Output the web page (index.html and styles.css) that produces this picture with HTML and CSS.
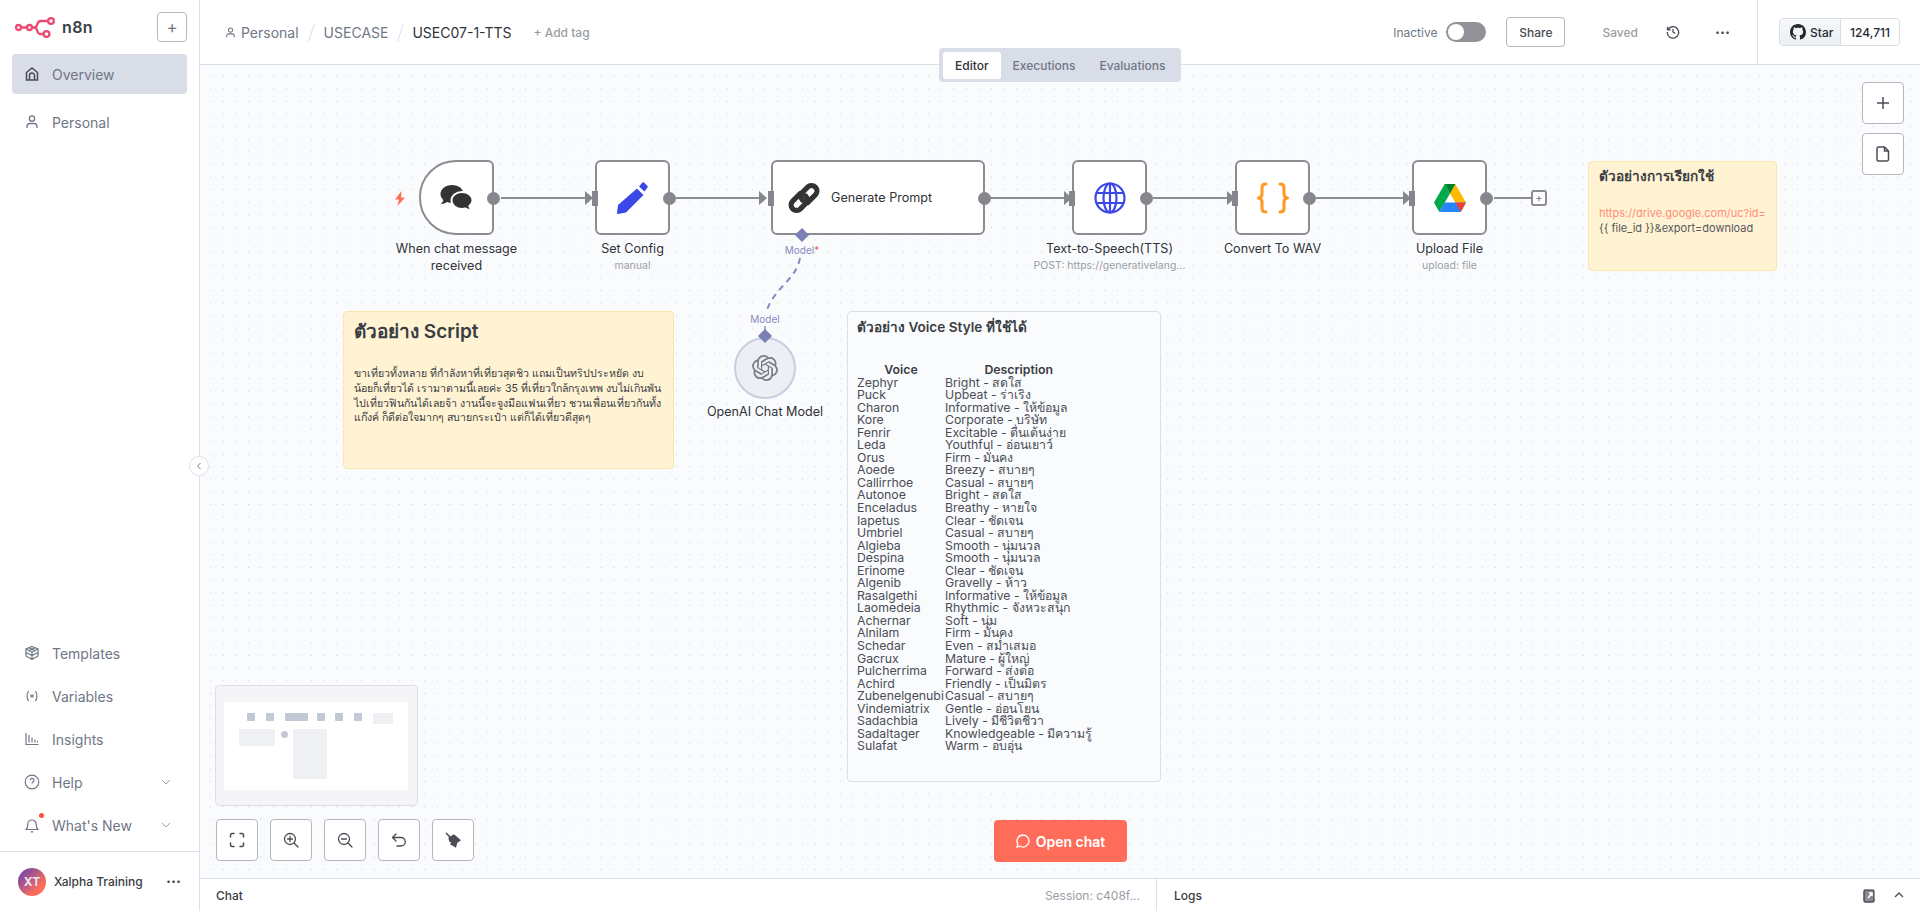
FILE: index.html
```html
<!DOCTYPE html>
<html lang="en">
<head>
    <meta charset="UTF-8">
    <meta name="viewport" content="width=device-width, initial-scale=1.0">
    <title>USEC07-1-TTS - n8n</title>
    <link rel="stylesheet" href="styles.css">
</head>
<body>
    <aside class="sidebar">
        <div class="brand">
            <svg class="logo" width="41" height="21" viewBox="0 0 41 21" fill="none" stroke="#ea4b71" stroke-width="2.300">
                <circle cx="3.500" cy="10.500" r="2.500"/>
                <circle cx="14.500" cy="10.500" r="2.500"/>
                <circle cx="36" cy="4" r="2.900"/>
                <circle cx="31.500" cy="17" r="2.900"/>
                <path d="M6 10.500h6M17 10.500h2.500c3.500 0 2-6.500 6-6.500h7.100M19.500 10.500c3.500 0 2 6.500 5.500 6.500h3.600"/>
            </svg>
            <span class="brand-name">n8n</span>
            <button class="add-btn">+</button>
        </div>
        <nav class="nav-top">
            <a class="nav-item active">
                <svg class="nav-icon" viewBox="0 0 16 16" fill="none" stroke="#4a4d55" stroke-width="1.500"><path d="M2.500 14V6.500L8 2l5.500 4.500V14zM5.500 14V9.500a2.500 2.500 0 0 1 5 0V14"/></svg>
                <span>Overview</span>
            </a>
            <a class="nav-item">
                <svg class="nav-icon" viewBox="0 0 16 16" fill="none" stroke="#6f7786" stroke-width="1.300"><circle cx="8" cy="4.500" r="2.700"/><path d="M3 14v-1.500a3 3 0 0 1 3-3h4a3 3 0 0 1 3 3V14"/></svg>
                <span>Personal</span>
            </a>
        </nav>
        <nav class="nav-bottom">
            <a class="nav-item">
                <svg class="nav-icon" viewBox="0 0 16 16" fill="none" stroke="#6f7786" stroke-width="1.200"><path d="M8 1.500l6 2.500v7l-6 3.500L2 11V4zM2 4l6 3 6-3M8 7v7.500M2 7.500l6 3 6-3M5 2.800l6 2.800M11 2.800L5 5.600"/></svg>
                <span>Templates</span>
            </a>
            <a class="nav-item">
                <svg class="nav-icon" viewBox="0 0 16 16" fill="none" stroke="#6f7786" stroke-width="1.200"><path d="M4.500 3C2.800 6 2.800 10 4.500 13M11.500 3c1.700 3 1.700 7 0 10M6.300 6.300l3.400 3.400M9.700 6.300l-3.400 3.400"/></svg>
                <span>Variables</span>
            </a>
            <a class="nav-item">
                <svg class="nav-icon" viewBox="0 0 16 16" fill="none" stroke="#6f7786" stroke-width="1.200"><path d="M2 2v11.500h12.500M5 4v7.500M8 6.500v5M11 8.500v3M13.500 10v1.500"/></svg>
                <span>Insights</span>
            </a>
            <a class="nav-item">
                <svg class="nav-icon" viewBox="0 0 16 16" fill="none" stroke="#6f7786" stroke-width="1.200"><circle cx="8" cy="8" r="6.800"/><path d="M6.200 6.200a1.900 1.900 0 1 1 2.800 1.700c-.7.400-1 .8-1 1.500M8 11.500v.3"/></svg>
                <span>Help</span>
                <svg class="chevron" viewBox="0 0 10 6" fill="none" stroke="#9a9ea5" stroke-width="1"><path d="M1 1l4 4 4-4"/></svg>
            </a>
            <a class="nav-item">
                <span class="bell">
                    <svg class="nav-icon" viewBox="0 0 16 16" fill="none" stroke="#6f7786" stroke-width="1.200"><path d="M2 12.500c1.500-1.500 1.800-3 1.800-5.300a4.200 4.200 0 0 1 8.400 0c0 2.300.3 3.800 1.800 5.300zM6.700 14.800h2.600"/></svg>
                    <i class="bell-dot"></i>
                </span>
                <span>What's New</span>
                <svg class="chevron" viewBox="0 0 10 6" fill="none" stroke="#9a9ea5" stroke-width="1"><path d="M1 1l4 4 4-4"/></svg>
            </a>
        </nav>
        <div class="user">
            <span class="avatar">XT</span>
            <span class="user-name">Xalpha Training</span>
            <span class="user-more">&middot;&middot;&middot;</span>
        </div>
        <button class="collapse">
            <svg width="6" height="8" viewBox="0 0 6 8" fill="none" stroke="#6f7786" stroke-width="1"><path d="M4.500 1L1.500 4l3 3"/></svg>
        </button>
    </aside>

    <main class="main">
        <header class="topbar">
            <div class="crumbs">
                <svg width="11" height="11" viewBox="0 0 16 16" fill="none" stroke="#6f7786" stroke-width="1.500"><circle cx="8" cy="4.500" r="3"/><path d="M2.500 15v-2a3 3 0 0 1 3-3h5a3 3 0 0 1 3 3v2"/></svg>
                <span class="crumb crumb-first">Personal</span>
                <span class="slash"></span>
                <span class="crumb">USECASE</span>
                <span class="slash slash-tight"></span>
                <span class="crumb crumb-current">USEC07-1-TTS</span>
                <span class="add-tag">+ Add tag</span>
            </div>
            <div class="actions">
                <span class="inactive">Inactive</span>
                <span class="toggle"><i></i></span>
                <button class="share">Share</button>
                <span class="saved">Saved</span>
                <svg class="history" width="14" height="14" viewBox="0 0 16 16" fill="none" stroke="#4a4d55" stroke-width="1.500"><path d="M2.200 5.500A6.500 6.500 0 1 1 1.500 8M1.800 2v3.500h3.500M8 4.500V8l2.500 1.500"/></svg>
                <span class="more">&middot;&middot;&middot;</span>
            </div>
            <div class="github">
                <span class="gh-star">
                    <svg width="16" height="16" viewBox="0 0 16 16" fill="#24292f"><path d="M8 0C3.580 0 0 3.580 0 8c0 3.540 2.290 6.530 5.470 7.590.4.070.55-.17.55-.38 0-.19-.01-.82-.01-1.490-2.010.37-2.530-.49-2.690-.94-.09-.23-.48-.94-.82-1.130-.28-.15-.68-.52-.01-.53.630-.01 1.080.58 1.230.82.720 1.210 1.870.87 2.330.66.070-.52.280-.87.510-1.070-1.780-.2-3.640-.89-3.640-3.950 0-.87.310-1.590.82-2.150-.08-.2-.36-1.020.08-2.120 0 0 .67-.21 2.200.82.640-.18 1.320-.27 2-.27s1.360.09 2 .27c1.530-1.040 2.200-.82 2.200-.82.440 1.100.160 1.920.08 2.120.510.560.820 1.270.820 2.150 0 3.070-1.870 3.750-3.650 3.950.290.250.540.730.540 1.480 0 1.070-.01 1.930-.01 2.200 0 .210.150.460.550.380A8.010 8.010 0 0 0 16 8c0-4.420-3.580-8-8-8z"/></svg>
                    Star
                </span>
                <span class="gh-count">124,711</span>
            </div>
        </header>

        <section class="canvas">
            <div class="tabs">
                <span class="tab tab-active">Editor</span>
                <span class="tab">Executions</span>
                <span class="tab">Evaluations</span>
            </div>

            <svg class="edges" width="1720" height="813" fill="none">
                <g stroke="#8b8d92" stroke-width="2">
                    <path d="M301 133H389M476 133H562M790 133H868M953 133H1030M1116 133H1206M1294 133H1331"/>
                </g>
                <g fill="#85878c">
                    <path d="M385 126l8 7-8 7zM559 126l8 7-8 7zM864 126l8 7-8 7zM1027 126l8 7-8 7zM1203 126l8 7-8 7z"/>
                </g>
                <path d="M600 193C596 215 575 222 567 245" stroke="#8a8ac0" stroke-width="2" stroke-dasharray="6 5"/>
                <path d="M565 261V270" stroke="#8a8ac0" stroke-width="1.500"/>
            </svg>

            <!-- workflow nodes -->
            <div class="node-wrap nw-chat">
                <span class="bolt">
                    <svg width="12" height="15" viewBox="0 0 12 15" fill="#ff6d5a"><path d="M7.500 0L1 8.500h4L3.500 15 11 6.500H7z"/></svg>
                </span>
                <div class="node node-trigger">
                    <svg width="33" height="27" viewBox="0 0 33 27">
                        <path d="M12 1C5.500 1 .5 5 .5 10c0 2.300 1.100 4.300 2.800 5.900-.3 1.700-1.300 3-2.800 4.100 2.800 0 5-.8 6.600-2 1.500.6 3.100.9 4.900.9 6.500 0 11.500-4 11.500-9S18.500 1 12 1z" fill="#333"/>
                        <path d="M22 8c-6 0-10.500 3.700-10.500 8.500S16 25 22 25c1.300 0 2.500-.2 3.700-.5 1.500 1 3.500 1.800 6.300 1.800-1.300-1.200-2.300-2.600-2.700-4.200 2-1.500 3.200-3.500 3.200-5.600C32.500 11.700 28 8 22 8z" fill="#333" stroke="#fff" stroke-width="2"/>
                    </svg>
                    <i class="out-dot"></i>
                </div>
                <div class="node-label">When chat message<br>received</div>
            </div>

            <div class="node-wrap nw-set">
                <div class="node">
                    <i class="in-port"></i>
                    <svg width="31" height="32" viewBox="0 0 31 32" fill="#3c47e8">
                        <path d="M20 6.500l6.500 6.500L9 30.500 1 32c-.6 0-1-.4-1-1l1-8z"/>
                        <path d="M22 4.500L25.500.5c.5-.5 1-.5 1.500 0l3.500 3.500c.5.500.5 1 0 1.500L27.500 9.500z"/>
                    </svg>
                    <i class="out-dot"></i>
                </div>
                <div class="node-label">Set Config</div>
                <div class="node-sub">manual</div>
            </div>

            <div class="node-wrap nw-prompt">
                <div class="node node-wide">
                    <i class="in-port"></i>
                    <svg width="34" height="34" viewBox="0 0 33 33" fill="none" stroke="#333" stroke-width="5" stroke-linecap="round">
                        <path d="M13 12l-7.500 7.500a5.300 5.300 0 0 0 7.500 7.500l5-5a5.300 5.300 0 0 0 0-7.500"/>
                        <path d="M20 21l7.500-7.500a5.300 5.300 0 0 0-7.500-7.500l-5 5a5.300 5.300 0 0 0 0 7.500"/>
                    </svg>
                    <span class="node-inline">Generate Prompt</span>
                    <i class="out-dot"></i>
                    <i class="port-diamond"></i>
                </div>
                <div class="model-tag">Model<b>*</b></div>
            </div>

            <div class="node-wrap nw-tts">
                <div class="node">
                    <i class="in-port"></i>
                    <svg width="32" height="32" viewBox="0 0 32 32" fill="none" stroke="#3c47e8" stroke-width="2.200">
                        <circle cx="16" cy="16" r="14.500"/>
                        <ellipse cx="16" cy="16" rx="6.500" ry="14.500"/>
                        <path d="M16 1.500v29M2 11h28M2 21h28"/>
                    </svg>
                    <i class="out-dot"></i>
                </div>
                <div class="node-label">Text-to-Speech(TTS)</div>
                <div class="node-sub">POST: https://generativelang...</div>
            </div>

            <div class="node-wrap nw-wav">
                <div class="node">
                    <i class="in-port"></i>
                    <svg width="32" height="32" viewBox="0 0 32 32" fill="none" stroke="#ff9922" stroke-width="3" stroke-linecap="round" stroke-linejoin="round">
                        <path d="M9 2c-3 0-4 1-4 3.500V12c0 2-1 3.500-3.500 4C4 16.500 5 18 5 20v6.500C5 29 6 30 9 30"/>
                        <path d="M23 2c3 0 4 1 4 3.500V12c0 2 1 3.500 3.500 4-2.500.500-3.500 2-3.500 4v6.500c0 2.500-1 3.500-4 3.500"/>
                    </svg>
                    <i class="out-dot"></i>
                </div>
                <div class="node-label">Convert To WAV</div>
            </div>

            <div class="node-wrap nw-drive">
                <div class="node">
                    <i class="in-port"></i>
                    <svg width="32" height="28" viewBox="0 0 32 28">
                        <path d="M10.700 0h10.600L32 18.500H21.300z" fill="#ffba00"/>
                        <path d="M10.700 0L0 18.500l5.300 9.500 10.700-18.500z" fill="#00a94b"/>
                        <path d="M10.700 18.500H32L26.700 28H5.300z" fill="#2684fc"/>
                        <path d="M21.300 18.500H32L26.700 28z" fill="#ea4335"/>
                        <path d="M10.700 0l5.300 9.500L21.300 0z" fill="#00832d"/>
                    </svg>
                    <i class="out-dot"></i>
                </div>
                <div class="node-label">Upload File</div>
                <div class="node-sub">upload: file</div>
            </div>

            <span class="plus-end">+</span>

            <div class="sub-node">
                <div class="model-tag model-tag-sub">Model</div>
                <i class="sub-diamond"></i>
                <div class="circle">
                    <svg width="26" height="26" viewBox="0 0 24 24" fill="#7a7d85"><path d="M22.282 9.821a5.985 5.985 0 0 0-.516-4.910 6.046 6.046 0 0 0-6.510-2.900A6.065 6.065 0 0 0 4.981 4.180a5.985 5.985 0 0 0-3.998 2.900 6.046 6.046 0 0 0 .743 7.097 5.980 5.980 0 0 0 .510 4.911 6.051 6.051 0 0 0 6.515 2.900A5.985 5.985 0 0 0 13.260 24a6.056 6.056 0 0 0 5.772-4.206 5.990 5.990 0 0 0 3.997-2.900 6.056 6.056 0 0 0-.747-7.073zM13.260 22.430a4.476 4.476 0 0 1-2.876-1.040l.141-.081 4.779-2.758a.795.795 0 0 0 .392-.681v-6.737l2.020 1.168a.071.071 0 0 1 .038.052v5.583a4.504 4.504 0 0 1-4.494 4.494zM3.600 18.304a4.470 4.470 0 0 1-.535-3.014l.142.085 4.783 2.759a.771.771 0 0 0 .781 0l5.843-3.369v2.332a.080.080 0 0 1-.033.062L9.740 19.950a4.500 4.500 0 0 1-6.140-1.646zM2.340 7.896a4.485 4.485 0 0 1 2.366-1.973V11.600a.766.766 0 0 0 .388.676l5.815 3.355-2.020 1.168a.076.076 0 0 1-.071 0l-4.830-2.786A4.504 4.504 0 0 1 2.340 7.872zm16.597 3.855l-5.833-3.387L15.119 7.200a.076.076 0 0 1 .071 0l4.830 2.791a4.494 4.494 0 0 1-.676 8.105v-5.678a.790.790 0 0 0-.407-.667zm2.010-3.023l-.141-.085-4.774-2.782a.776.776 0 0 0-.785 0L9.409 9.230V6.897a.066.066 0 0 1 .028-.061l4.830-2.787a4.500 4.500 0 0 1 6.680 4.660zm-12.640 4.135l-2.020-1.164a.080.080 0 0 1-.038-.057V6.075a4.500 4.500 0 0 1 7.375-3.453l-.142.080L8.704 5.460a.795.795 0 0 0-.393.681zm1.097-2.365l2.602-1.500 2.607 1.500v2.999l-2.597 1.500-2.607-1.500z"/></svg>
                </div>
                <div class="sub-label">OpenAI Chat Model</div>
            </div>

            <!-- sticky notes -->
            <div class="sticky sticky-yellow sticky-script">
                <h2>ตัวอย่าง Script</h2>
                <p>ขาเที่ยวทั้งหลาย ที่กำลังหาที่เที่ยวสุดชิว แถมเป็นทริปประหยัด งบ<br>น้อยก็เที่ยวได้ เรามาตามนี้เลยค่ะ 35 ที่เที่ยวใกล้กรุงเทพ งบไม่เกินพัน<br>ไปเที่ยวฟินกันได้เลยจ้า งานนี้จะจูงมือแฟนเที่ยว ชวนเพื่อนเที่ยวกันทั้ง<br>แก๊งค์ ก็ดีต่อใจมากๆ สบายกระเป๋า แต่ก็ได้เที่ยวดีสุดๆ</p>
            </div>

            <div class="sticky sticky-yellow sticky-url">
                <h3>ตัวอย่างการเรียกใช้</h3>
                <p><span class="link">https://drive.google.com/uc?id=</span><br>{{ file_id }}&amp;export=download</p>
            </div>

            <div class="sticky sticky-voices">
                <h3>ตัวอย่าง Voice Style ที่ใช้ได้</h3>
                <table class="voices">
                    <thead><tr><th>Voice</th><th>Description</th></tr></thead>
                    <tbody>
                        <tr><td>Zephyr</td><td>Bright - สดใส</td></tr>
                        <tr><td>Puck</td><td>Upbeat - ร่าเริง</td></tr>
                        <tr><td>Charon</td><td>Informative - ให้ข้อมูล</td></tr>
                        <tr><td>Kore</td><td>Corporate - บริษัท</td></tr>
                        <tr><td>Fenrir</td><td>Excitable - ตื่นเต้นง่าย</td></tr>
                        <tr><td>Leda</td><td>Youthful - อ่อนเยาว์</td></tr>
                        <tr><td>Orus</td><td>Firm - มั่นคง</td></tr>
                        <tr><td>Aoede</td><td>Breezy - สบายๆ</td></tr>
                        <tr><td>Callirrhoe</td><td>Casual - สบายๆ</td></tr>
                        <tr><td>Autonoe</td><td>Bright - สดใส</td></tr>
                        <tr><td>Enceladus</td><td>Breathy - หายใจ</td></tr>
                        <tr><td>Iapetus</td><td>Clear - ชัดเจน</td></tr>
                        <tr><td>Umbriel</td><td>Casual - สบายๆ</td></tr>
                        <tr><td>Algieba</td><td>Smooth - นุ่มนวล</td></tr>
                        <tr><td>Despina</td><td>Smooth - นุ่มนวล</td></tr>
                        <tr><td>Erinome</td><td>Clear - ชัดเจน</td></tr>
                        <tr><td>Algenib</td><td>Gravelly - ห้าว</td></tr>
                        <tr><td>Rasalgethi</td><td>Informative - ให้ข้อมูล</td></tr>
                        <tr><td>Laomedeia</td><td>Rhythmic - จังหวะสนุก</td></tr>
                        <tr><td>Achernar</td><td>Soft - นุ่ม</td></tr>
                        <tr><td>Alnilam</td><td>Firm - มั่นคง</td></tr>
                        <tr><td>Schedar</td><td>Even - สม่ำเสมอ</td></tr>
                        <tr><td>Gacrux</td><td>Mature - ผู้ใหญ่</td></tr>
                        <tr><td>Pulcherrima</td><td>Forward - ส่งต่อ</td></tr>
                        <tr><td>Achird</td><td>Friendly - เป็นมิตร</td></tr>
                        <tr><td>Zubenelgenubi</td><td>Casual - สบายๆ</td></tr>
                        <tr><td>Vindemiatrix</td><td>Gentle - อ่อนโยน</td></tr>
                        <tr><td>Sadachbia</td><td>Lively - มีชีวิตชีวา</td></tr>
                        <tr><td>Sadaltager</td><td>Knowledgeable - มีความรู้</td></tr>
                        <tr><td>Sulafat</td><td>Warm - อบอุ่น</td></tr>
                    </tbody>
                </table>
            </div>

            <!-- right side buttons -->
            <div class="side-btns">
                <button class="tool-btn">
                    <svg width="14" height="14" viewBox="0 0 14 14" fill="none" stroke="#4a4d55" stroke-width="1.500"><path d="M7 1v12M1 7h12"/></svg>
                </button>
                <button class="tool-btn">
                    <svg width="14" height="16" viewBox="0 0 14 16" fill="none" stroke="#4a4d55" stroke-width="1.500"><path d="M2.500 1h6l4 4v8.500a1.500 1.500 0 0 1-1.500 1.500h-8.500A1.500 1.500 0 0 1 1 13.500v-11A1.500 1.500 0 0 1 2.500 1zM8.500 1v4h4"/></svg>
                </button>
            </div>

            <svg class="minimap" width="203" height="121" viewBox="0 0 203 121">
                <rect x=".5" y=".5" width="202" height="120" rx="4" fill="#f5f5f7" stroke="#dcdfe6"/>
                <rect x="9" y="17" width="184" height="88" fill="#fff"/>
                <g fill="#c3c8d5">
                    <rect x="32" y="28" width="8" height="8" rx="1"/>
                    <rect x="51" y="28" width="8" height="8" rx="1"/>
                    <rect x="70" y="28" width="23" height="8" rx="1"/>
                    <rect x="102" y="28" width="8" height="8" rx="1"/>
                    <rect x="120" y="28" width="8" height="8" rx="1"/>
                    <rect x="139" y="28" width="8" height="8" rx="1"/>
                    <circle cx="69.500" cy="49.500" r="3.500"/>
                </g>
                <g fill="#eff0f3">
                    <rect x="158" y="28" width="20" height="11"/>
                    <rect x="24" y="44" width="36" height="17" rx="1"/>
                    <rect x="78" y="44" width="34" height="50"/>
                </g>
            </svg>

            <div class="zoom-btns">
                <button class="tool-btn">
                    <svg width="16" height="16" viewBox="0 0 16 16" fill="none" stroke="#4a4d55" stroke-width="1.500" stroke-linecap="round"><path d="M1.500 5V3a1.500 1.500 0 0 1 1.500-1.500h2M11 1.500h2A1.500 1.500 0 0 1 14.500 3v2M14.500 11v2a1.500 1.500 0 0 1-1.500 1.500h-2M5 14.500H3A1.500 1.500 0 0 1 1.500 13v-2"/></svg>
                </button>
                <button class="tool-btn">
                    <svg width="16" height="16" viewBox="0 0 16 16" fill="none" stroke="#4a4d55" stroke-width="1.300" stroke-linecap="round"><circle cx="7" cy="7" r="5.500"/><path d="M11 11l4 4M7 4.500v5M4.500 7h5"/></svg>
                </button>
                <button class="tool-btn">
                    <svg width="16" height="16" viewBox="0 0 16 16" fill="none" stroke="#4a4d55" stroke-width="1.300" stroke-linecap="round"><circle cx="7" cy="7" r="5.500"/><path d="M11 11l4 4M4.500 7h5"/></svg>
                </button>
                <button class="tool-btn">
                    <svg width="16" height="16" viewBox="0 0 16 16" fill="none" stroke="#4a4d55" stroke-width="1.300" stroke-linecap="round" stroke-linejoin="round"><path d="M5 2L1.500 5.500 5 9M1.500 5.500H10a4 4 0 0 1 0 8.500H6"/></svg>
                </button>
                <button class="tool-btn">
                    <svg width="17" height="17" viewBox="0 0 17 17" fill="#4a4d55"><path d="M1 1l5.500 5.500" stroke="#4a4d55" stroke-width="1.600"/><path d="M3.300 5.700L9 2.300l7 6-3.700 2.400-1.300 5-6-3.400 1.300-2.600-1.800.6z"/></svg>
                </button>
            </div>

            <button class="open-chat">
                <svg width="14" height="14" viewBox="0 0 14 14" fill="none" stroke="#fff" stroke-width="1.300"><path d="M7 1a6 6 0 1 1-2.800 11.300L1 13l.8-3A6 6 0 0 1 7 1z"/></svg>
                Open chat
            </button>
        </section>

        <footer class="bottombar">
            <div class="chat-side">
                <span class="chat-title">Chat</span>
                <span class="session">Session: c408f...</span>
            </div>
            <div class="logs-side">
                <span class="logs-title">Logs</span>
                <svg width="14" height="16" viewBox="0 0 14 16" fill="none" stroke="#4a4d55" stroke-width="1.500"><rect x="1" y="3" width="10" height="12" rx="1.500" fill="#8b8d92"/><path d="M3 1.500h9.500V12M5 11l4-5M6 6h3v3" stroke="#fff"/></svg>
                <svg width="10" height="6" viewBox="0 0 10 6" fill="none" stroke="#4a4d55" stroke-width="1.300"><path d="M1 5l4-4 4 4"/></svg>
            </div>
        </footer>
    </main>
</body>
</html>
```

FILE: styles.css
```css
* {
    box-sizing: border-box;
}

html, body {
    height: 100%;
}

body {
    margin: 0;
    display: flex;
    overflow: hidden;
    font-family: Inter, "Noto Sans", sans-serif;
    color: #2f3237;
    background: #fff;
}

button {
    font-family: inherit;
    cursor: pointer;
}

/* sidebar */
.sidebar {
    width: 200px;
    flex: none;
    position: relative;
    z-index: 4;
    display: flex;
    flex-direction: column;
    border-right: 1px solid #dbdfe7;
    background: #fff;
}

.brand {
    height: 54px;
    display: flex;
    align-items: center;
    padding: 0 12px 0 15px;
}

.logo {
    flex: none;
}

.brand-name {
    margin-left: 6px;
    font-size: 16px;
    font-weight: 600;
    letter-spacing: 0.4px;
    color: #3a3d44;
}

.add-btn {
    margin-left: auto;
    width: 30px;
    height: 30px;
    padding: 0;
    border: 1px solid #b4b7bf;
    border-radius: 4px;
    background: #fff;
    font-size: 17px;
    color: #6f7786;
}

.nav-top {
    display: flex;
    flex-direction: column;
    gap: 8px;
    padding: 0 12px;
}

.nav-bottom {
    margin-top: auto;
    display: flex;
    flex-direction: column;
    gap: 3px;
    padding: 0 12px 6px;
}

.nav-item {
    height: 40px;
    display: flex;
    align-items: center;
    gap: 12px;
    padding: 0 12px;
    border-radius: 4px;
    font-size: 14px;
    color: #6f7786;
}

.nav-item.active {
    background: #d9dde8;
}

.nav-icon {
    width: 16px;
    height: 16px;
    flex: none;
}

.chevron {
    width: 10px;
    height: 6px;
    margin-left: auto;
    margin-right: 4px;
}

.bell {
    position: relative;
    display: flex;
}

.bell-dot {
    position: absolute;
    top: -4px;
    right: -4px;
    width: 5px;
    height: 5px;
    border-radius: 50%;
    background: #ff4d3d;
}

.user {
    height: 60px;
    display: flex;
    align-items: center;
    padding: 0 18px;
    border-top: 1px solid #dbdfe7;
}

.avatar {
    width: 28px;
    height: 28px;
    flex: none;
    display: flex;
    align-items: center;
    justify-content: center;
    border-radius: 50%;
    background: linear-gradient(135deg, #5b3fb5, #ff6d5a 75%);
    font-size: 12px;
    font-weight: 700;
    color: #e9e4f5;
}

.user-name {
    margin-left: 8px;
    font-size: 12px;
    font-weight: 500;
    color: #3a3d44;
}

.user-more, .more {
    margin-left: auto;
    font-size: 15px;
    font-weight: 700;
    color: #4a4d55;
}

.collapse {
    position: absolute;
    top: 456px;
    right: -10px;
    z-index: 5;
    width: 20px;
    height: 20px;
    padding: 0;
    display: flex;
    align-items: center;
    justify-content: center;
    border: 1px solid #dbdfe7;
    border-radius: 50%;
    background: #fff;
}

/* main column */
.main {
    flex: 1;
    min-width: 0;
    display: flex;
    flex-direction: column;
}

.topbar {
    height: 65px;
    flex: none;
    display: flex;
    align-items: center;
    border-bottom: 1px solid #dbdfe7;
    background: #fff;
}

.crumbs {
    display: flex;
    align-items: center;
    padding-left: 25px;
    font-size: 14px;
    color: #6f7786;
}

.crumb-first {
    margin-left: 5px;
}

.slash {
    width: 1px;
    height: 19px;
    margin: 0 12px;
    background: #dbdfe7;
    transform: rotate(18deg);
}

.slash-tight {
    margin-right: 11px;
}

.crumb-current {
    color: #2f3237;
}

.add-tag {
    margin-left: 22px;
    font-size: 12px;
    font-weight: 500;
    color: #9a9ea5;
}

.actions {
    margin-left: auto;
    height: 100%;
    display: flex;
    align-items: center;
    padding-right: 27px;
    border-right: 1px solid #dbdfe7;
}

.inactive {
    font-size: 12px;
    color: #6f7786;
}

.toggle {
    width: 40px;
    height: 20px;
    margin-left: 9px;
    padding: 2px;
    display: flex;
    border-radius: 10px;
    background: #909298;
}

.toggle i {
    width: 16px;
    height: 16px;
    border-radius: 50%;
    background: #fff;
}

.share {
    width: 59px;
    height: 30px;
    margin-left: 20px;
    padding: 0;
    border: 1px solid #b4b7bf;
    border-radius: 4px;
    background: #fff;
    font-size: 12px;
    font-weight: 500;
    color: #4a4d55;
}

.saved {
    margin-left: 37px;
    font-size: 12px;
    font-weight: 500;
    color: #9a9ea5;
}

.history {
    margin-left: 28px;
}

.more {
    margin-left: 35px;
}

.github {
    display: flex;
    height: 28px;
    margin-left: 21px;
    margin-right: 20px;
    border: 1px solid #d8dee4;
    border-radius: 4px;
    font-size: 12px;
    font-weight: 500;
    color: #24292f;
}

.gh-star {
    width: 61px;
    display: flex;
    align-items: center;
    gap: 4px;
    padding-left: 10px;
    border-right: 1px solid #d8dee4;
    background: linear-gradient(#f6f8fa, #ebf0f4);
}

.gh-count {
    flex: 1;
    width: 58px;
    display: flex;
    align-items: center;
    justify-content: center;
}

/* canvas */
.canvas {
    flex: 1;
    position: relative;
    background-color: #fafbfd;
    background-image: radial-gradient(circle, #c9ccd3 0.6px, transparent 0.8px);
    background-size: 12.600px 12.600px;
    background-position: 4.400px 5px;
}

.tabs {
    position: absolute;
    top: -17px;
    left: 739px;
    z-index: 3;
    display: flex;
    align-items: center;
    height: 34px;
    padding: 0 4px;
    border-radius: 4px;
    background: #d9dde8;
    font-size: 12px;
    font-weight: 500;
    color: #6f7786;
}

.tab {
    padding: 6px 12px;
}

.tab-active {
    border-radius: 3px;
    background: #fff;
    color: #2f3237;
}

.edges {
    position: absolute;
    top: 0;
    left: 0;
}

.node-wrap {
    position: absolute;
    top: 95px;
    display: flex;
    flex-direction: column;
    align-items: center;
    width: 160px;
}

.nw-chat { left: 176.500px; }
.nw-set { left: 352.500px; }
.nw-prompt { left: 571px; width: 214px; }
.nw-tts { left: 829.500px; }
.nw-wav { left: 992.500px; }
.nw-drive { left: 1169.500px; }

.node {
    position: relative;
    width: 75px;
    height: 75px;
    flex: none;
    display: flex;
    align-items: center;
    justify-content: center;
    border: 2px solid #8b8d92;
    border-radius: 6px;
    background: #fff;
}

.node-trigger {
    border-radius: 37px 6px 6px 37px;
}

.node-wide {
    width: 214px;
    justify-content: flex-start;
    padding-left: 14px;
}

.node-inline {
    margin-left: 10px;
    font-size: 12.600px;
    color: #2f3237;
}

.out-dot {
    position: absolute;
    top: 30px;
    right: -8px;
    width: 13px;
    height: 13px;
    border-radius: 50%;
    background: #85878c;
}

.in-port {
    position: absolute;
    top: 29px;
    left: -5px;
    width: 6px;
    height: 15px;
    background: #85878c;
}

.port-diamond, .sub-diamond {
    position: absolute;
    width: 10px;
    height: 10px;
    background: #7c80b4;
    transform: rotate(45deg);
}

.port-diamond {
    bottom: -7px;
    left: 24px;
}

.model-tag {
    position: absolute;
    top: 84px;
    left: 11px;
    width: 40px;
    text-align: center;
    font-size: 10px;
    color: #8a8ac0;
}

.model-tag b {
    color: #ff4d6a;
    font-weight: 400;
}

.node-label {
    margin-top: 5px;
    text-align: center;
    font-size: 12.600px;
    line-height: 17px;
    color: #2f3237;
}

.node-sub {
    margin-top: 2px;
    font-size: 10.500px;
    line-height: 14px;
    color: #9a9ea5;
    white-space: nowrap;
}

.bolt {
    position: absolute;
    top: 30px;
    left: 17px;
}

.plus-end {
    position: absolute;
    top: 125px;
    left: 1331px;
    width: 16px;
    height: 16px;
    display: flex;
    align-items: center;
    justify-content: center;
    border: 2px solid #8b8d92;
    border-radius: 3px;
    background: #fff;
    font-size: 11px;
    line-height: 1;
    color: #6f7786;
}

.sub-node {
    position: absolute;
    top: 247px;
    left: 480px;
    width: 170px;
    display: flex;
    flex-direction: column;
    align-items: center;
}

.model-tag-sub {
    position: static;
    width: auto;
    line-height: 14px;
}

.sub-diamond {
    position: relative;
    margin-top: 5px;
    margin-bottom: -4px;
    z-index: 2;
}

.circle {
    width: 62px;
    height: 62px;
    display: flex;
    align-items: center;
    justify-content: center;
    border: 2px solid #c8cede;
    border-radius: 50%;
    background: #eeeff5;
}

.sub-label {
    margin-top: 4px;
    font-size: 12.600px;
    line-height: 17px;
    color: #2f3237;
}

.sticky {
    position: absolute;
    border: 1px solid #dbdfe7;
    border-radius: 4px;
    background: #fafbfd;
}

.sticky-yellow {
    border-color: #fbe5a8;
    background: #fff3d3;
}

.sticky h2 {
    margin: 0;
    font-size: 19px;
    font-weight: 600;
    line-height: 25px;
    color: #3a3d44;
}

.sticky h3 {
    margin: 0;
    font-size: 13.600px;
    font-weight: 600;
    line-height: 20px;
    color: #3a3d44;
}

.sticky-script {
    top: 246px;
    left: 143px;
    width: 331px;
    height: 158px;
    padding: 7px 10px;
}

.sticky-script p {
    margin: 23px 0 0;
    font-size: 10.600px;
    line-height: 14.800px;
    white-space: nowrap;
    color: #3a3d44;
}

.sticky-url {
    top: 96px;
    left: 1388px;
    width: 189px;
    height: 110px;
    padding: 4px 10px;
}

.sticky-url p {
    margin: 20px 0 0;
    font-size: 11px;
    line-height: 15px;
    white-space: nowrap;
    color: #55585f;
}

.link {
    color: #ff8d7a;
}

.sticky-voices {
    top: 246px;
    left: 647px;
    width: 314px;
    height: 471px;
    padding: 5px 9px;
}

.voices {
    margin-top: 27px;
    border-collapse: collapse;
    font-size: 12.300px;
    line-height: 12.540px;
    color: #4a4d55;
}

.voices th {
    padding: 0;
    font-weight: 600;
    color: #3a3d44;
}

.voices td {
    padding: 0;
}

.voices td:first-child, .voices th:first-child {
    width: 88px;
}

.side-btns {
    position: absolute;
    top: 17px;
    right: 16px;
    display: flex;
    flex-direction: column;
    gap: 9px;
}

.tool-btn {
    width: 42px;
    height: 42px;
    padding: 0;
    display: flex;
    align-items: center;
    justify-content: center;
    border: 1px solid #b4b7bf;
    border-radius: 4px;
    background: #fff;
}

.minimap {
    position: absolute;
    left: 15px;
    bottom: 72px;
}

.zoom-btns {
    position: absolute;
    left: 16px;
    bottom: 17px;
    display: flex;
    gap: 12px;
}

.open-chat {
    position: absolute;
    left: 794px;
    bottom: 16px;
    width: 133px;
    height: 42px;
    display: flex;
    align-items: center;
    justify-content: center;
    gap: 6px;
    padding: 0;
    border: none;
    border-radius: 4px;
    background: #ff6d5a;
    font-size: 14px;
    font-weight: 600;
    color: #fff;
}

/* bottom bar */
.bottombar {
    height: 33px;
    flex: none;
    display: flex;
    border-top: 1px solid #dbdfe7;
    background: #fff;
    font-size: 12px;
}

.chat-side {
    width: 957px;
    display: flex;
    align-items: center;
    justify-content: space-between;
    padding: 0 16px;
    border-right: 1px solid #dbdfe7;
}

.chat-title, .logs-title {
    font-weight: 500;
    color: #3a3d44;
}

.session {
    color: #9a9ea5;
}

.logs-side {
    flex: 1;
    display: flex;
    align-items: center;
    gap: 17px;
    padding: 0 16px 0 17px;
}

.logs-title {
    margin-right: auto;
}
```
